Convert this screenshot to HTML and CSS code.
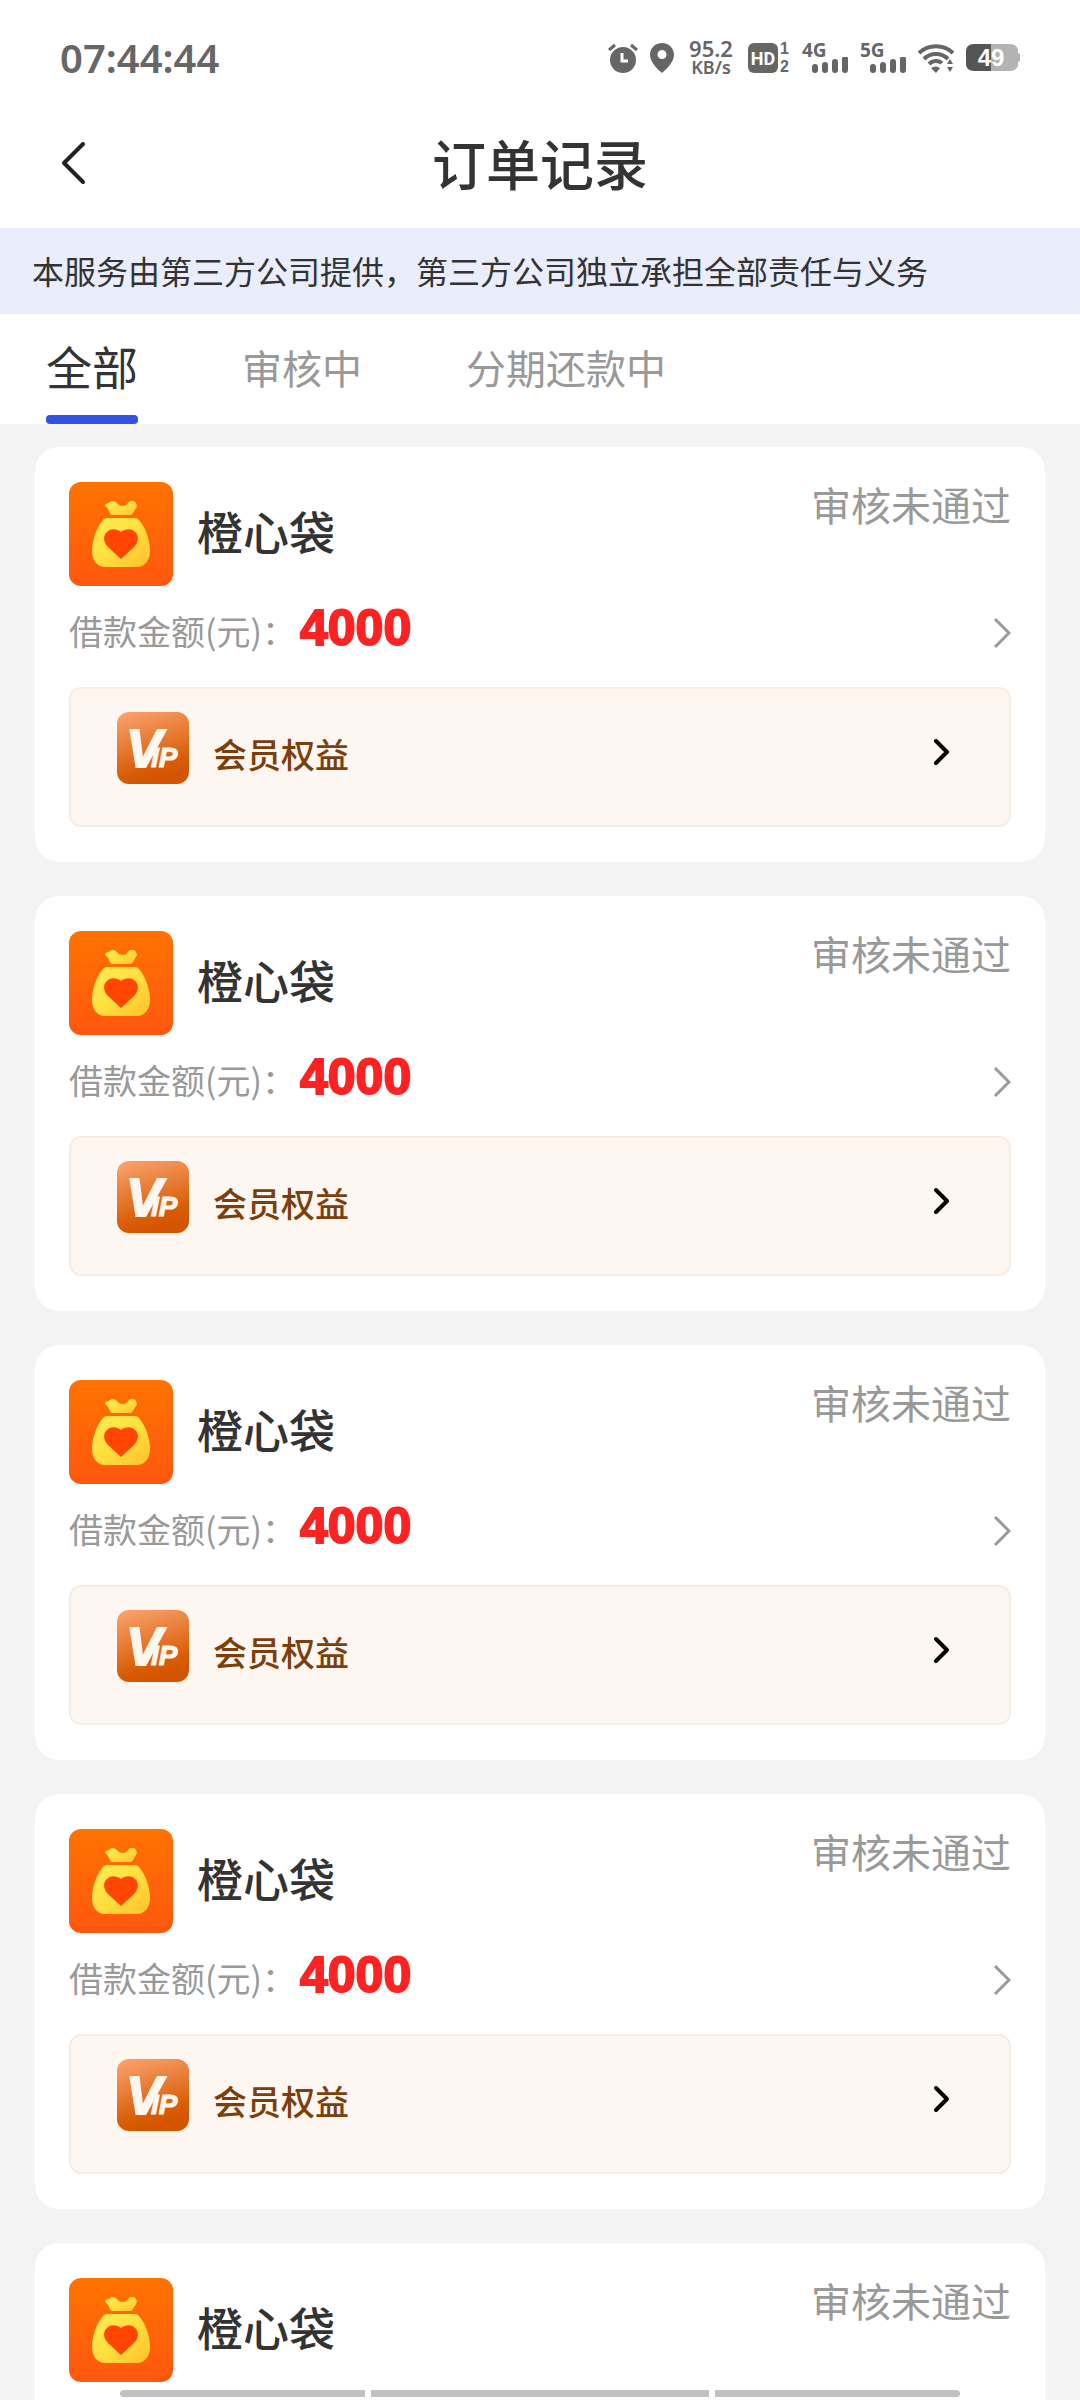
FILE: index.html
```html
<!DOCTYPE html>
<html lang="zh-CN">
<head>
    <meta charset="UTF-8">
    <meta name="viewport" content="width=device-width, initial-scale=1.0">
    <title>订单记录</title>
    <link rel="stylesheet" href="styles.css">
</head>
<body>
    <!-- shared icons -->
    <svg class="sprite" aria-hidden="true">
        <defs>
            <linearGradient id="orange" x1="0" y1="0" x2="0" y2="1">
                <stop offset="0" stop-color="#ff7300"/>
                <stop offset="1" stop-color="#ff570f"/>
            </linearGradient>
            <linearGradient id="gold" x1="0" y1="0" x2="1" y2="1">
                <stop offset="0" stop-color="#ffec50"/>
                <stop offset="0.5" stop-color="#ffdf3e"/>
                <stop offset="1" stop-color="#ffc02c"/>
            </linearGradient>
            <linearGradient id="copper" x1="0" y1="0" x2="0.3" y2="1">
                <stop offset="0" stop-color="#fba470"/>
                <stop offset="0.85" stop-color="#d85c05"/>
                <stop offset="1" stop-color="#d45500"/>
            </linearGradient>
            <symbol id="bag" viewBox="0 0 104 104">
                <rect width="104" height="104" rx="12" fill="url(#orange)"/>
                <path fill="url(#gold)" d="M36 23C37 21 39 22 41 20C43 18 46 19 48 21C50 25 57 25 59 21C61 18 65 18 67 21C68 23 68 25 67 26L64 31C63 32 63 33 61 33H44C42 33 41 32 41 31L39 27C38 25 36 25 36 23Z"/>
                <path fill="url(#gold)" d="M38 36h28c2 0 3 1 4 2 7 8 11 21 11 31 0 9-5 16-13 16H36c-8 0-13-7-13-16 0-10 4-23 11-31 1-1 2-2 4-2z"/>
                <path fill="#ff4500" d="M52 77L39 65c-5-5-5-12-1-15 4-4 10-3 14 0 4-3 10-4 14 0 4 3 4 10-1 15z"/>
            </symbol>
            <symbol id="vip" viewBox="0 0 72 72">
                <rect width="72" height="72" rx="12" fill="url(#copper)"/>
                <text class="vip-v" x="9" y="55">V</text>
                <text class="vip-ip" x="34" y="55">IP</text>
            </symbol>
            <symbol id="arrow" viewBox="0 0 20 32">
                <path d="M4 2l14 14L4 30" fill="none" stroke="#999" stroke-width="3"/>
            </symbol>
            <symbol id="arrow-bold" viewBox="0 0 18 30">
                <path d="M3 4l11 11L3 26" fill="none" stroke="#000" stroke-width="4" stroke-linecap="round" stroke-linejoin="round"/>
            </symbol>
            <symbol id="bars" viewBox="0 0 36 16">
                <path d="M3 10v3M13 8v5M23 5v8M33 2v11" fill="none" stroke="#666" stroke-width="6" stroke-linecap="round"/>
            </symbol>
        </defs>
    </svg>

    <div class="app">
        <div class="status-bar">
            <time class="clock">07:44:44</time>
            <div class="status-icons">
                <svg width="30" height="30" viewBox="0 0 30 30">
                    <circle cx="15" cy="17" r="13" fill="#666"/>
                    <path d="M1 7l6-5M29 7l-6-5" stroke="#666" stroke-width="3"/>
                    <path d="M14 10v8h6" fill="none" stroke="#fff" stroke-width="3"/>
                </svg>
                <svg width="24" height="30" viewBox="0 0 24 30">
                    <path fill="#666" fill-rule="evenodd" d="M12 0c7 0 12 5 12 12 0 6-6 13-12 18C6 25 0 18 0 12 0 5 5 0 12 0zm0 7a4 4 0 1 0 0 9 4 4 0 0 0 0-9z"/>
                </svg>
                <div class="speed"><span>95.2</span><span class="unit">KB/s</span></div>
                <svg width="42" height="30" viewBox="0 0 42 30">
                    <rect width="30" height="30" rx="6" fill="#666"/>
                    <text class="hd-text" x="15" y="22">HD</text>
                    <text class="sim" x="32" y="11">1</text>
                    <text class="sim" x="32" y="29">2</text>
                </svg>
                <div class="signal">
                    <span>4G</span>
                    <svg width="36" height="16"><use href="#bars"/></svg>
                </div>
                <div class="signal">
                    <span>5G</span>
                    <svg width="36" height="16"><use href="#bars"/></svg>
                </div>
                <svg width="36" height="30" viewBox="0 0 36 30">
                    <path d="M1 10a25 25 0 0 1 34 0M6 16a17 17 0 0 1 24 0M11 21a10 10 0 0 1 13-1" fill="none" stroke="#666" stroke-width="4"/>
                    <path fill="#666" d="M13 25q5-3 9 0l-4 5zM29 21l3-5 3 5zM29 24h6l-3 5z"/>
                </svg>
                <svg width="54" height="28" viewBox="0 0 54 28">
                    <path fill="#b3b3b3" d="M25 0h19c5 0 8 3 8 7v2c1 0 2 1 2 2v5c0 1-1 2-2 2v2c0 4-3 7-8 7H25z"/>
                    <path fill="#555" d="M25 0v27H8c-5 0-8-3-8-7V7c0-4 3-7 8-7z"/>
                    <text class="battery-text" x="25" y="22">49</text>
                </svg>
            </div>
        </div>

        <header class="nav">
            <button class="back" type="button" aria-label="返回">
                <svg width="26" height="44" viewBox="0 0 26 44">
                    <path d="M23 3L4 22l19 19" fill="none" stroke="#222" stroke-width="4" stroke-linecap="round" stroke-linejoin="round"/>
                </svg>
            </button>
            <h1>订单记录</h1>
        </header>

        <p class="notice">本服务由第三方公司提供，第三方公司独立承担全部责任与义务</p>

        <nav class="tabs">
            <button class="tab active" type="button">全部</button>
            <button class="tab" type="button">审核中</button>
            <button class="tab" type="button">分期还款中</button>
        </nav>

        <main class="orders">
            <article class="card">
                <div class="card-head">
                    <svg width="104" height="104"><use href="#bag"/></svg>
                    <h2>橙心袋</h2>
                    <span class="state">审核未通过</span>
                </div>
                <a class="amount-row" href="#">
                    <span class="label">借款金额(元)：</span>
                    <strong class="amount">4000</strong>
                    <svg class="more" width="20" height="32"><use href="#arrow"/></svg>
                </a>
                <a class="vip" href="#">
                    <svg width="72" height="72"><use href="#vip"/></svg>
                    <span class="vip-label">会员权益</span>
                    <svg class="vip-more" width="18" height="30"><use href="#arrow-bold"/></svg>
                </a>
            </article>

            <article class="card">
                <div class="card-head">
                    <svg width="104" height="104"><use href="#bag"/></svg>
                    <h2>橙心袋</h2>
                    <span class="state">审核未通过</span>
                </div>
                <a class="amount-row" href="#">
                    <span class="label">借款金额(元)：</span>
                    <strong class="amount">4000</strong>
                    <svg class="more" width="20" height="32"><use href="#arrow"/></svg>
                </a>
                <a class="vip" href="#">
                    <svg width="72" height="72"><use href="#vip"/></svg>
                    <span class="vip-label">会员权益</span>
                    <svg class="vip-more" width="18" height="30"><use href="#arrow-bold"/></svg>
                </a>
            </article>

            <article class="card">
                <div class="card-head">
                    <svg width="104" height="104"><use href="#bag"/></svg>
                    <h2>橙心袋</h2>
                    <span class="state">审核未通过</span>
                </div>
                <a class="amount-row" href="#">
                    <span class="label">借款金额(元)：</span>
                    <strong class="amount">4000</strong>
                    <svg class="more" width="20" height="32"><use href="#arrow"/></svg>
                </a>
                <a class="vip" href="#">
                    <svg width="72" height="72"><use href="#vip"/></svg>
                    <span class="vip-label">会员权益</span>
                    <svg class="vip-more" width="18" height="30"><use href="#arrow-bold"/></svg>
                </a>
            </article>

            <article class="card">
                <div class="card-head">
                    <svg width="104" height="104"><use href="#bag"/></svg>
                    <h2>橙心袋</h2>
                    <span class="state">审核未通过</span>
                </div>
                <a class="amount-row" href="#">
                    <span class="label">借款金额(元)：</span>
                    <strong class="amount">4000</strong>
                    <svg class="more" width="20" height="32"><use href="#arrow"/></svg>
                </a>
                <a class="vip" href="#">
                    <svg width="72" height="72"><use href="#vip"/></svg>
                    <span class="vip-label">会员权益</span>
                    <svg class="vip-more" width="18" height="30"><use href="#arrow-bold"/></svg>
                </a>
            </article>

            <article class="card">
                <div class="card-head">
                    <svg width="104" height="104"><use href="#bag"/></svg>
                    <h2>橙心袋</h2>
                    <span class="state">审核未通过</span>
                </div>
                <a class="amount-row" href="#">
                    <span class="label">借款金额(元)：</span>
                    <strong class="amount">4000</strong>
                    <svg class="more" width="20" height="32"><use href="#arrow"/></svg>
                </a>
                <a class="vip" href="#">
                    <svg width="72" height="72"><use href="#vip"/></svg>
                    <span class="vip-label">会员权益</span>
                    <svg class="vip-more" width="18" height="30"><use href="#arrow-bold"/></svg>
                </a>
            </article>
        </main>

        <!-- gesture bar -->
        <div class="gesture"><i></i><i class="home"></i><i></i></div>
    </div>
</body>
</html>
```
FILE: styles.css
```css
* {
    box-sizing: border-box;
}
body {
    margin: 0;
    font-family: "Noto Sans CJK SC", "Noto Sans", sans-serif;
    color: #333;
    background: #f3f3f3;
}
h1, h2, p {
    margin: 0;
}
a {
    color: inherit;
    text-decoration: none;
}
button {
    padding: 0;
    border: none;
    background: none;
    font-family: inherit;
    cursor: pointer;
}
svg {
    display: block;
    flex-shrink: 0;
    overflow: visible;
}
.sprite {
    position: absolute;
    width: 0;
    height: 0;
}
.app {
    display: flex;
    flex-direction: column;
    height: 100vh;
}

/* status bar */
.status-bar {
    display: flex;
    flex-shrink: 0;
    justify-content: space-between;
    align-items: center;
    height: 100px;
    padding: 16px 60px 0;
    background: #fff;
    color: #666;
    font-family: "Noto Sans", sans-serif;
}
.clock {
    font-size: 40px;
    font-weight: 600;
    line-height: 40px;
}
.status-icons {
    display: flex;
    align-items: center;
    gap: 12px;
    font-weight: 600;
}
.speed {
    display: flex;
    flex-direction: column;
    align-items: center;
    width: 50px;
    font-size: 22px;
    line-height: 19px;
}
.speed .unit {
    font-size: 18px;
}
.signal {
    display: flex;
    flex-direction: column;
    width: 46px;
    font-size: 19px;
    font-weight: 700;
    line-height: 14px;
}
.signal svg {
    align-self: flex-end;
}
.hd-text {
    font: 700 18px Roboto, sans-serif;
    fill: #fff;
    text-anchor: middle;
}
.sim {
    font: 700 16px "Liberation Sans", sans-serif;
    fill: #666;
}
.battery-text {
    font: 700 24px "Liberation Sans", sans-serif;
    fill: #fff;
    text-anchor: middle;
}

/* title */
.nav {
    display: grid;
    flex-shrink: 0;
    grid-template-columns: 60px 1fr 60px;
    align-items: center;
    height: 128px;
    padding: 0 60px 2px;
    background: #fff;
}
.nav h1 {
    font-size: 54px;
    font-weight: 500;
    line-height: 80px;
    text-align: center;
}
.notice {
    flex-shrink: 0;
    height: 86px;
    padding: 0 32px;
    background: #eaedfc;
    font-size: 32px;
    line-height: 84px;
    white-space: nowrap;
}

/* tabs */
.tabs {
    display: flex;
    flex-shrink: 0;
    gap: 104px;
    height: 110px;
    padding: 0 46px;
    background: #fff;
}
.tab {
    display: flex;
    position: relative;
    height: 110px;
    color: #999;
    font-size: 40px;
    line-height: 106px;
}
.tab.active {
    color: #333;
    font-size: 46px;
    line-height: 102px;
}
.tab.active::after {
    content: "";
    position: absolute;
    left: 0;
    right: 0;
    bottom: 0;
    height: 9px;
    border-radius: 4px;
    background: #3451e4;
}

/* order list */
.orders {
    display: flex;
    flex: 1;
    flex-direction: column;
    gap: 34px;
    min-height: 0;
    padding: 23px 35px;
    overflow-y: auto;
    scrollbar-width: none;
}
.card {
    flex-shrink: 0;
    padding: 35px 34px;
    border-radius: 24px;
    background: #fff;
}
.card-head {
    display: flex;
    align-items: flex-start;
}
.card-head h2 {
    flex: 1;
    margin-left: 24px;
    font-size: 46px;
    font-weight: 500;
    line-height: 96px;
}
.state {
    color: #999;
    font-size: 40px;
    line-height: 44px;
}
.amount-row {
    display: flex;
    align-items: baseline;
    height: 94px;
    margin-bottom: 7px;
    line-height: 84px;
}
.label {
    color: #999;
    font-size: 34px;
}
.amount {
    margin-left: 4px;
    color: #fe2222;
    font-family: "Liberation Sans", sans-serif;
    font-size: 50px;
    -webkit-text-stroke: 2px #fe2222;
}
.more {
    align-self: center;
    margin-left: auto;
}
.vip {
    display: flex;
    align-items: flex-end;
    padding: 23px 58px 41px 46px;
    border: 2px solid #f8ece3;
    border-radius: 12px;
    background: #fef7f1;
    color: #7a3f0c;
}
.vip-label {
    flex: 1;
    margin-left: 24px;
    font-size: 34px;
    font-weight: 500;
    line-height: 60px;
}
.vip-more {
    margin-bottom: 17px;
}
.vip-v, .vip-ip {
    font-family: "Liberation Sans", sans-serif;
    font-size: 54px;
    font-style: italic;
    font-weight: 700;
    fill: #fff7ee;
    stroke: #fff7ee;
    stroke-width: 2px;
}
.vip-ip {
    font-size: 28px;
    stroke-width: 1px;
}

/* gesture bar */
.gesture {
    position: fixed;
    right: 120px;
    bottom: 3px;
    left: 120px;
    display: flex;
    gap: 6px;
}
.gesture i {
    flex: 245;
    height: 7px;
    border-radius: 4px 0 0 4px;
    background: #c1c1c1;
}
.gesture .home {
    flex: 338;
    border-radius: 0;
}
.gesture i:last-child {
    border-radius: 0 4px 4px 0;
}
```
